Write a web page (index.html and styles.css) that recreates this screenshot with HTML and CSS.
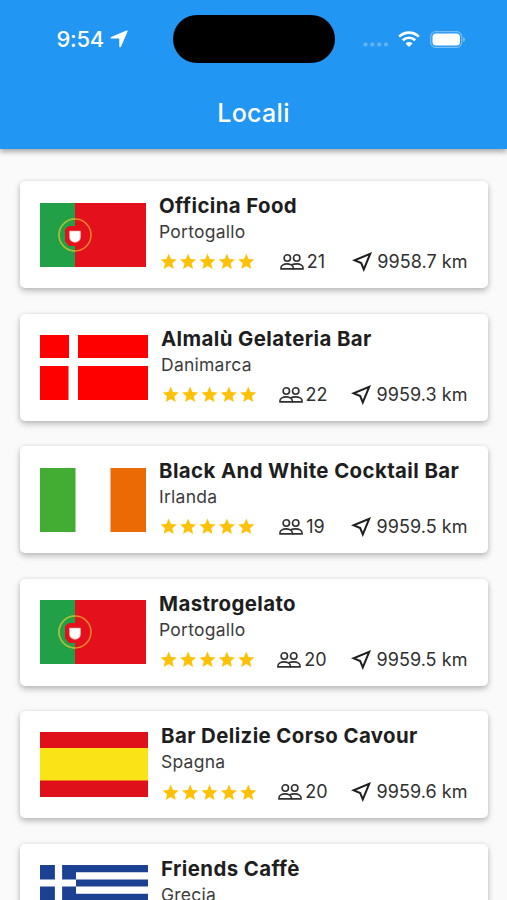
FILE: index.html
```
<!DOCTYPE html>
<html lang="it">
<head>
<meta charset="utf-8">
<title>Locali</title>
<link rel="stylesheet" href="styles.css">
</head>
<body>
<svg class="defs" aria-hidden="true">
  <symbol id="star" viewBox="0 0 24 24"><path d="M12 17.27 18.18 21l-1.64-7.03L22 9.24l-7.19-.61L12 2 9.19 8.63 2 9.24l5.46 4.73L5.82 21z"/></symbol>
  <symbol id="stars" viewBox="0 0 120 24"><use href="#star" width="24" height="24"/><use href="#star" x="24" width="24" height="24"/><use href="#star" x="48" width="24" height="24"/><use href="#star" x="72" width="24" height="24"/><use href="#star" x="96" width="24" height="24"/></symbol>
  <symbol id="people" viewBox="0 0 24 18"><g fill="none" stroke="currentColor" stroke-width="1.6"><circle cx="7.3" cy="5" r="3.2"/><circle cx="16.7" cy="5" r="3.2"/><path d="M1 15.900v-1.400c0-2.100 3-3.600 6-3.600s6.300 1.500 6.300 3.600v1.400z"/><path d="M11.600 11.700c1.500-.6 3.500-.8 5.400-.8 3 0 6 1.500 6 3.600v1.400h-9.700"/></g></symbol>
  <symbol id="near" viewBox="0 0 20 20"><path d="M18.200 1.800 11.800 17.400 9.200 11 2.500 8.300z" fill="none" stroke="currentColor" stroke-width="2"/></symbol>
  <symbol id="portugal" viewBox="0 0 106 64"><path fill="#e4101b" d="M0 0h106v64H0z"/><path fill="#21a047" d="M0 0h35v64H0z"/><path fill="#e4101b" d="M35 23h-6l-4 3v12l4 5h6z"/><circle cx="35" cy="32" r="16" fill="none" stroke="#e58a2c" stroke-width="1.500"/><path fill="none" stroke="#96c83a" stroke-width="1.500" d="M35 16a16 16 0 0 0 0 32"/><path fill="#fff" stroke="#f4a0a0" stroke-width=".6" d="M29.500 28h11v6c0 7-11 7-11 0z"/></symbol>
</svg>
<header class="appbar">
  <div class="status">
    <span class="clock">9:54</span>
    <svg class="locate" viewBox="0 0 18 18"><path fill="currentColor" d="M16.400.500c.8-.3 1.400.3 1.100 1.100L11 16.700c-.4 1-1.700.8-1.700-.3V9.200c0-.4-.2-.6-.6-.6H1.500C.4 8.600.200 7.300 1.200 6.900z"/></svg>
    <div class="island"></div>
    <svg class="signal" viewBox="0 0 26 5" fill="currentColor"><circle cx="2.500" cy="2.500" r="2.100"/><circle cx="9.300" cy="2.500" r="2.100"/><circle cx="16.200" cy="2.500" r="2.100"/><circle cx="23" cy="2.500" r="2.100"/></svg>
    <svg class="wifi" viewBox="0 0 22 16"><g fill="none" stroke="currentColor" stroke-width="2.700"><path d="M1.200 5.600a14 14 0 0 1 19.600 0"/><path d="M4.800 9.300a8.800 8.800 0 0 1 12.400 0"/></g><path fill="currentColor" d="M11 16 7.500 12.500a5 5 0 0 1 7 0z"/></svg>
    <svg class="battery" viewBox="0 0 36 17"><rect x=".7" y=".7" width="31" height="15.600" rx="5" fill="none" stroke="#fff" stroke-opacity=".4" stroke-width="1.200"/><rect x="2.500" y="2.500" width="27.500" height="12" rx="3.500" fill="#fff"/><path d="M33.300 6v5c2-.8 2-4.200 0-5z" fill="#fff" fill-opacity=".5"/></svg>
  </div>
  <h1>Locali</h1>
</header>
<main class="list">
  <article class="card">
    <svg class="flag narrow"><use href="#portugal"/></svg>
    <div class="info"><h2>Officina Food</h2><p>Portogallo</p>
      <div class="meta"><svg class="stars"><use href="#stars"/></svg><span class="guests"><svg><use href="#people"/></svg>21</span><span class="distance"><svg><use href="#near"/></svg>9958.7 km</span></div></div>
  </article>
  <article class="card">
    <svg class="flag" viewBox="0 0 108 65"><path fill="#fe0000" d="M0 0h29v23H0zM38 0h70v23H38zM0 31h28.500v34H0zM38 31h70v34H38z"/></svg>
    <div class="info"><h2>Almalù Gelateria Bar</h2><p>Danimarca</p>
      <div class="meta"><svg class="stars"><use href="#stars"/></svg><span class="guests"><svg><use href="#people"/></svg>22</span><span class="distance"><svg><use href="#near"/></svg>9959.3 km</span></div></div>
  </article>
  <article class="card">
    <svg class="flag narrow" viewBox="0 0 106 64"><path fill="#43ad33" d="M0 0h35.500v64H0z"/><path fill="#eb6a05" d="M70.500 0H106v64H70.500z"/></svg>
    <div class="info"><h2>Black And White Cocktail Bar</h2><p>Irlanda</p>
      <div class="meta"><svg class="stars"><use href="#stars"/></svg><span class="guests"><svg><use href="#people"/></svg>19</span><span class="distance"><svg><use href="#near"/></svg>9959.5 km</span></div></div>
  </article>
  <article class="card">
    <svg class="flag narrow"><use href="#portugal"/></svg>
    <div class="info"><h2>Mastrogelato</h2><p>Portogallo</p>
      <div class="meta"><svg class="stars"><use href="#stars"/></svg><span class="guests"><svg><use href="#people"/></svg>20</span><span class="distance"><svg><use href="#near"/></svg>9959.5 km</span></div></div>
  </article>
  <article class="card">
    <svg class="flag" viewBox="0 0 108 65"><path fill="#e0101b" d="M0 0h108v65H0z"/><path fill="#fae316" d="M0 16h108v32.500H0z"/></svg>
    <div class="info"><h2>Bar Delizie Corso Cavour</h2><p>Spagna</p>
      <div class="meta"><svg class="stars"><use href="#stars"/></svg><span class="guests"><svg><use href="#people"/></svg>20</span><span class="distance"><svg><use href="#near"/></svg>9959.6 km</span></div></div>
  </article>
  <article class="card">
    <svg class="flag" viewBox="0 0 108 65"><path fill="#1c4193" d="M0 0h108v65H0z"/><path stroke="#fff" stroke-width="7.200" d="M36 10.800h72M36 25.200h72M0 39.600h108M0 54h108M0 18h36M18.500 0v36"/></svg>
    <div class="info"><h2>Friends Caffè</h2><p>Grecia</p></div>
  </article>
</main>
</body>
</html>
```
FILE: styles.css
```
* { box-sizing: border-box; }
html, body { height: 900px; overflow: hidden; }
body { margin: 0; background: #fafafa; color: #1e1e1e; font-family: Inter, sans-serif; }
h1, h2, p { margin: 0; }
svg { display: block; flex: none; }
.defs { position: absolute; width: 0; height: 0; }
.appbar { position: relative; z-index: 1; height: 149px; background: #2196f3; color: #fff; box-shadow: 0 3px 5px rgba(0, 0, 0, .32); }
.status { height: 78px; display: flex; align-items: center; padding-left: 56.500px; }
.clock { width: 48px; font-size: 22px; font-weight: 550; letter-spacing: -.3px; white-space: nowrap; }
.locate { width: 18px; height: 18px; margin-left: 5px; }
.island { width: 162px; height: 48px; margin-left: 45.500px; border-radius: 24px; background: #000; }
.signal { width: 26px; height: 5px; margin: 10px 0 0 28px; opacity: .3; }
.wifi { width: 22px; height: 16px; margin-left: 9px; }
.battery { width: 36px; height: 17px; margin-left: 10px; }
h1 { height: 70px; line-height: 70px; text-align: center; font-size: 25px; font-weight: 500; letter-spacing: .3px; }
.list { height: 751px; overflow: hidden; padding: 32px 19px 0 20px; display: grid; grid-auto-rows: 107px; gap: 25.600px; }
.card { display: flex; padding: 0 20px 0 19.500px; background: #fff; border-radius: 5px; box-shadow: 0 3px 6px rgba(0, 0, 0, .25), 0 0 4px rgba(0, 0, 0, .07); }
.flag { width: 108px; height: 65px; margin-top: 21px; }
.flag.narrow { width: 106px; height: 64px; margin-top: 21.500px; }
.info { flex: 1; min-width: 0; padding: 12px 0 0 13.500px; }
h2 { height: 27px; line-height: 25px; font-size: 20.400px; font-weight: 700; letter-spacing: .4px; white-space: nowrap; }
p { height: 24px; line-height: 23px; font-size: 17.500px; color: #3c3c3c; letter-spacing: .25px; }
.meta { height: 36px; display: flex; align-items: center; justify-content: space-between; font-size: 18px; line-height: 22px; color: #303030; white-space: nowrap; }
.stars { width: 97px; height: 19.400px; fill: #ffc107; }
.guests, .distance { display: flex; align-items: center; }
.guests { margin-left: -3px; }
.guests svg { width: 24px; height: 18px; margin-right: 3px; }
.distance { margin-right: .500px; letter-spacing: .05px; }
.distance svg { width: 20px; height: 20px; margin-right: 5.500px; color: #1e1e1e; }
```
